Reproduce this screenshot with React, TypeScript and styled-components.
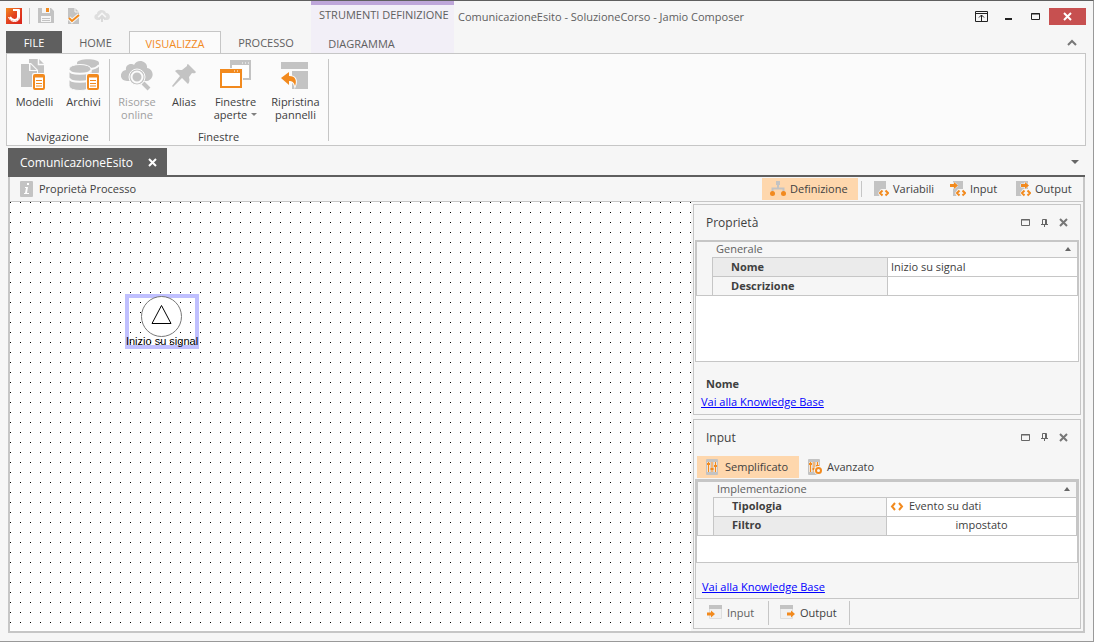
import React from "react";
import styled, { createGlobalStyle, css } from "styled-components";

const c = {
  text: "#404040",
  soft: "#606060",
  dark: "#5f5f5f",
  line: "#c6c6c6",
  bg: "#f6f6f6",
  gray: "#c3c3c3",
  orange: "#f28a1e",
  active: "#fed7ad",
};

const Global = createGlobalStyle`
  *, *::before, *::after { box-sizing: border-box; }
  body { margin: 0; background: ${c.bg}; }
  body, button, input {
    font-family: "Open Sans", "Noto Sans", sans-serif;
    font-size: 11px;
    color: ${c.text};
  }
  button { border: 0; padding: 0; background: none; }
  svg { display: block; flex: none; }
`;

const Window = styled.div`
  min-height: 100vh;
  display: flex;
  flex-direction: column;
  background: ${c.bg};
  border-top: 1px solid ${c.dark};
  border-right: 1px solid #999999;
  border-bottom: 1px solid #999999;
`;

const Header = styled.header`
  display: flex;
  height: 52px;
  padding: 0 7px 0 6px;
`;

const HeaderColumn = styled.div<{ $grow?: boolean; $width?: number }>`
  display: flex;
  flex-direction: column;
  ${(p) => p.$grow && "flex: 1;"}
  ${(p) => p.$width && `width: ${p.$width}px;`}
`;

const QuickAccess = styled.div`
  display: flex;
  align-items: center;
  height: 31px;
`;

const QuickButton = styled.button`
  width: 28px;
  height: 20px;
  display: grid;
  place-items: center;
`;

const QuickDivider = styled.span`
  width: 1px;
  height: 16px;
  margin: 0 2px 0 7px;
  background: ${c.line};
`;

const Tabs = styled.nav`
  display: flex;
  height: 22px;
  position: relative;
  z-index: 1;
`;

const RibbonTab = styled.button<{ $kind?: "file" | "active"; $width: number }>`
  width: ${(p) => p.$width}px;
  height: 21px;
  line-height: 24px;
  color: ${c.soft};
  ${(p) =>
    p.$kind === "file" &&
    css`
      height: 22px;
      color: #ffffff;
      background: ${c.dark};
    `}
  ${(p) =>
    p.$kind === "active" &&
    css`
      height: 22px;
      color: ${c.orange};
      background: #fbfbfb;
      border: 1px solid ${c.line};
      border-bottom: 0;
    `}
`;

const ContextGroup = styled.div`
  width: 143px;
  display: flex;
  flex-direction: column;
  background: #f2eff7;
  border-top: 4px solid #bea6d9;
`;

const ContextTitle = styled.div`
  height: 27px;
  padding-left: 8px;
  line-height: 20px;
  color: ${c.soft};
  white-space: nowrap;
`;

const TitleBar = styled.div`
  display: flex;
  align-items: center;
  height: 31px;
`;

const Title = styled.h1`
  flex: 1;
  margin: 0;
  padding-left: 4px;
  font-size: 11px;
  font-weight: 400;
  color: ${c.soft};
`;

const WindowButton = styled.button<{ $close?: boolean }>`
  width: ${(p) => (p.$close ? 37 : 27)}px;
  height: 17px;
  display: grid;
  place-items: center;
  background: ${(p) => (p.$close ? "#c75050" : "transparent")};
`;

const CollapseButton = styled.button`
  align-self: flex-end;
  width: 28px;
  height: 21px;
  display: grid;
  place-items: center;
`;

const Ribbon = styled.div`
  display: flex;
  height: 93px;
  margin: 0 7px 0 6px;
  padding: 5px 0 4px 0;
  background: #fbfbfb;
  border: 1px solid ${c.line};
`;

const RibbonGroup = styled.section`
  display: flex;
  flex-direction: column;
  justify-content: space-between;
  padding: 0 1px 0 3px;
  border-right: 1px solid ${c.line};
`;

const RibbonItems = styled.div`
  display: flex;
`;

const RibbonButton = styled.button<{ $width: number }>`
  width: ${(p) => p.$width}px;
  display: flex;
  flex-direction: column;
  align-items: center;
  gap: 4px;
  line-height: 13px;
  white-space: nowrap;
  &:disabled {
    color: #a0a0a0;
  }
`;

const GroupLabel = styled.div`
  height: 10px;
  padding-right: 3px;
  line-height: 11px;
  text-align: center;
`;

const MenuCaret = styled.span`
  display: inline-block;
  margin-left: 4px;
  vertical-align: 3px;
  border: 3px solid transparent;
  border-top-color: #808080;
  border-bottom: 0;
`;

const DocumentTabs = styled.div`
  display: flex;
  justify-content: space-between;
  align-items: center;
  height: 29px;
  margin: 2px 8px 0 8px;
  padding-right: 4px;
  border-bottom: 2px solid ${c.dark};
`;

const DocumentTab = styled.div`
  display: flex;
  align-items: center;
  gap: 14px;
  height: 27px;
  padding: 1px 8px 0 12px;
  font-size: 12px;
  color: #ffffff;
  background: ${c.dark};
`;

const IconButton = styled.button`
  width: 12px;
  height: 16px;
  display: grid;
  place-items: center;
`;

const Workspace = styled.main`
  flex: 1;
  display: flex;
  flex-direction: column;
  margin: 0 8px 8px 8px;
  border: solid ${c.line};
  border-width: 0 2px 2px 2px;
`;

const Toolbar = styled.div`
  display: flex;
  align-items: center;
  height: 25px;
  padding: 0 1px 1px 2px;
  border-bottom: 1px solid ${c.line};
`;

const ToolButton = styled.button<{ $active?: boolean; $width?: number }>`
  display: flex;
  align-items: center;
  gap: 4px;
  height: 22px;
  padding: 0 8px;
  white-space: nowrap;
  ${(p) => p.$width && `width: ${p.$width}px;`}
  background: ${(p) => (p.$active ? c.active : "transparent")};
`;

const InfoButton = styled(ToolButton)`
  gap: 6px;
`;

const Spacer = styled.span`
  flex: 1;
`;

const ToolDivider = styled.span`
  width: 1px;
  height: 16px;
  margin: 0 3px;
  background: ${c.line};
`;

const Content = styled.div`
  flex: 1;
  display: flex;
`;

const Canvas = styled.div`
  flex: 1;
  position: relative;
  background: conic-gradient(from 270deg at 1px 1px, #000000 90deg, #ffffff 0) 0 0 / 10px 10px;
`;

const DiagramNode = styled.div`
  position: absolute;
  left: 115px;
  top: 92px;
  width: 74px;
  height: 55px;
  border: 4px solid #c0c0ff;
`;

const NodeShape = styled.svg`
  position: absolute;
  left: 10px;
  top: -4px;
`;

const NodeLabel = styled.span`
  position: absolute;
  left: -10px;
  right: -10px;
  bottom: -3px;
  line-height: 14px;
  text-align: center;
  font-family: "Liberation Sans", sans-serif;
  color: #000000;
  white-space: nowrap;
`;

const Side = styled.aside`
  width: 392px;
  display: flex;
  flex-direction: column;
  gap: 4px;
  padding: 2px;
  background: ${c.bg};
`;

const Panel = styled.section`
  flex: 1 1 0;
  display: flex;
  flex-direction: column;
  border: 1px solid ${c.line};
`;

const PanelHeader = styled.div`
  display: flex;
  align-items: center;
  gap: 7px;
  height: 35px;
  padding: 0 11px 0 12px;
`;

const PanelTitle = styled.h2`
  flex: 1;
  margin: 0;
  font-size: 12px;
  font-weight: 400;
`;

const PanelTools = styled.div`
  display: flex;
  height: 24px;
  padding: 1px 3px 1px;
`;

const GridBox = styled.div`
  flex: 1;
  margin: 0 1px;
  background: #ffffff;
  border: 1px solid ${c.line};
`;

const FramedBox = styled.div`
  flex: 1;
  display: flex;
  flex-direction: column;
  margin: 0 1px;
  border: 1px solid ${c.line};
  ${GridBox} {
    margin: 0;
  }
`;

const PropertyTable = styled.table`
  width: 100%;
  table-layout: fixed;
  border-spacing: 0;
  border: 1px solid ${c.line};
  background: ${c.bg};
  td,
  th {
    height: 19px;
    padding: 0 0 1px;
    line-height: 16px;
  }
`;

const IndentColumn = styled.col`
  width: 15px;
`;

const NameColumn = styled.col<{ $width: number }>`
  width: ${(p) => p.$width}px;
`;

const GroupButton = styled.button`
  display: flex;
  align-items: center;
  justify-content: space-between;
  width: 100%;
  height: 14px;
  padding: 0 5px 0 19px;
  line-height: 14px;
  color: ${c.soft};
`;

const GroupCell = styled.td`
  && {
    height: 15px;
  }
`;

const NameCell = styled.th<{ $selected?: boolean }>`
  && {
    padding-left: 18px;
  }
  text-align: left;
  font-weight: 700;
  border: solid ${c.line};
  border-width: 1px 0 0 1px;
  background: ${(p) => (p.$selected ? "#ebebeb" : c.bg)};
`;

const ValueCell = styled.td`
  border: solid ${c.line};
  border-width: 1px 0 0 1px;
  background: #ffffff;
`;

const ValueInput = styled.input`
  display: block;
  width: 100%;
  height: 16px;
  padding: 0 3px 1px;
  border: 0;
  outline: 0;
  background: transparent;
`;

const Value = styled.div<{ $center?: boolean }>`
  display: flex;
  align-items: center;
  gap: 5px;
  padding: 0 3px;
  ${(p) => p.$center && "justify-content: center;"}
`;

const PanelFooter = styled.div<{ $height: number }>`
  height: ${(p) => p.$height}px;
  display: flex;
  flex-direction: column;
  justify-content: flex-end;
  align-items: flex-start;
  padding: 0 0 3px 7px;
  line-height: 18px;
  ${FramedBox} & {
    padding: 0 0 2px 6px;
  }
`;

const PropertyName = styled.strong`
  padding-left: 5px;
`;

const Link = styled.a`
  color: #0000ff;
`;

const BottomTabs = styled.div`
  display: flex;
  height: 29px;
  padding: 2px 0 3px 2px;
`;

const BottomTab = styled.button<{ $active?: boolean; $width: number }>`
  width: ${(p) => p.$width}px;
  display: flex;
  align-items: center;
  gap: 5px;
  padding: 0 0 2px 11px;
  border-right: 1px solid ${c.line};
  color: ${(p) => (p.$active ? c.soft : c.text)};
`;

const DocIcon = ({ x, y }: { x: number; y: number }) => (
  <g transform={`translate(${x} ${y})`}>
    <rect x="-1" y="-1" width="14" height="18" rx="2" fill="#fbfbfb" />
    <rect x="1" y="1" width="10" height="14" rx="1" fill="#fff" stroke={c.orange} strokeWidth="2" />
    <path d="M1 2.500h10" stroke={c.orange} strokeWidth="2" />
    <path d="M3 6.500h6M3 9.500h6M3 12h6" stroke={c.orange} fill="none" />
  </g>
);

const TemplatesIcon = () => (
  <svg width="32" height="32">
    <path d="M10 0h10l5 5v13H10z" fill={c.gray} />
    <path d="M19.500 0v5.500H25" stroke="#fbfbfb" fill="none" strokeWidth="1.500" />
    <path d="M1 4h11l7 7v17H1z" fill="#fbfbfb" />
    <path d="M2 5h8v7h8v16H2z" fill={c.gray} />
    <path d="m11.500 5 6 6h-6z" fill={c.gray} />
    <DocIcon x={14} y={15} />
  </svg>
);

const ArchiveIcon = () => (
  <svg width="32" height="32">
    <path d="M9 4c0-5 22-5 22 0v18c-1 3-8 4-12 4L9 12z" fill={c.gray} />
    <path d="M21 10c5 0 8-1 10-4M22 18c4 0 7-1 9-4" stroke="#fbfbfb" fill="none" strokeWidth="2" />
    <path d="M1 10c0-6 22-6 22 0v17c0 6-22 6-22 0z" fill={c.gray} stroke="#fbfbfb" />
    <path d="M1 11c1 5 21 5 22 0M1 19c1 5 21 5 22 0" stroke="#fbfbfb" strokeWidth="2" fill="none" />
    <DocIcon x={19} y={15} />
  </svg>
);

const CloudSearchIcon = () => (
  <svg width="32" height="32">
    <path d="M6 22c-8 0-8-10-1-11C4 5 11 4 13 6c3-7 14-4 13 3 7 1 8 11 0 13z" fill={c.gray} />
    <circle cx="16" cy="18" r="8" fill={c.gray} stroke="#fbfbfb" strokeWidth="1" />
    <circle cx="16" cy="18" r="5.500" fill={c.gray} stroke="#fbfbfb" strokeWidth="2" />
    <path d="m22 24 6 6" stroke="#fbfbfb" strokeWidth="6" />
    <path d="m22 24 6 6" stroke={c.gray} strokeWidth="4" />
  </svg>
);

const PushpinIcon = () => (
  <svg width="32" height="32">
    <path
      d="m20 5 8 8c-1 2-3 1-4 1l-3 4c1 4 0 6-1 7l-6-6L5 28l-1-1 8-10-5-5c2-2 5-1 7-1l5-4c0-1 0-2 1-2z"
      fill={c.gray}
    />
  </svg>
);

const WindowsIcon = () => (
  <svg width="32" height="32">
    <path d="M11 2h19v18H11z" fill="#fff" stroke={c.gray} strokeWidth="2" />
    <path d="M10 4h21" stroke={c.gray} strokeWidth="4" />
    <path d="M22 4h1M25 4h1M28 4h1" stroke="#fff" />
    <path d="M-1 9h24v22H-1z" fill="#fbfbfb" />
    <path d="M1 11h20v17H1z" fill="#fff" stroke={c.orange} strokeWidth="2" />
    <path d="M0 12h22" stroke={c.orange} strokeWidth="4" />
    <path d="M14 12h1M17 12h1" stroke="#fff" />
  </svg>
);

const RestoreIcon = () => (
  <svg width="32" height="32">
    <path d="M1 3h27v7H1zM12 12h16v18H12z" fill={c.gray} />
    <path d="m1 19 8-6v4c7 0 8 5 6 10-1-4-3-5-6-5v4z" fill={c.orange} stroke="#fbfbfb" strokeWidth="2" paintOrder="stroke" />
  </svg>
);

const Logo = () => (
  <svg width="16" height="16">
    <defs>
      <linearGradient id="logo" x1="0" y1="0" x2="1" y2="1">
        <stop offset="0" stopColor="#f28a1e" />
        <stop offset="0.5" stopColor="#e2401f" />
        <stop offset="1" stopColor="#d9231c" />
      </linearGradient>
    </defs>
    <rect width="16" height="16" fill="url(#logo)" />
    <path d="M7 1.500h6.500V9c0 3-2 4.500-5 4.500S3.500 12 2.500 9" fill="none" stroke="#fff" strokeWidth="1" />
    <path d="M7 2h5v7c0 2-1 3-3.500 3S5 11 4 9" fill="none" stroke="#fff" strokeWidth="2" />
  </svg>
);

const SaveIcon = () => (
  <svg width="16" height="16">
    <path d="M0 0h13l3 3v12H0z" fill={c.gray} />
    <path d="M4 0h8v5H4zM3 8h10v6H3z" fill="#f6f6f6" />
    <path d="M8 0h3v4H8z" fill={c.orange} />
    <path d="M4 10.500h8M4 12.500h8" stroke={c.gray} />
  </svg>
);

const CheckDocIcon = () => (
  <svg width="16" height="16">
    <path d="M2 0h7l4 4v12H2z" fill={c.gray} />
    <path d="M9 0v4h4" stroke="#f6f6f6" fill="none" />
    <path d="m3 10 3 3 7-6" stroke="#f6f6f6" strokeWidth="4" fill="none" />
    <path d="m3 10 3 3 7-6" stroke={c.orange} strokeWidth="2" fill="none" />
  </svg>
);

const UploadIcon = () => (
  <svg width="16" height="16">
    <path d="M3 12c-4-1-3-6 0-6 0-4 7-6 9-1 5 0 5 7 1 7z" fill="#dedede" />
    <path d="M8 15V7M5 10l3-3 3 3" stroke="#f6f6f6" strokeWidth="4" fill="none" />
    <path d="M8 14V8M5 11l3-3 3 3" stroke="#dadada" strokeWidth="2" fill="none" />
  </svg>
);

const InfoIcon = () => (
  <svg width="13" height="16">
    <rect width="13" height="16" rx="1" fill={c.gray} />
    <path d="M7 2h2v2H7zM5 6h3L7 12h2v1H4v-1h1l1-5H5z" fill="#fff" />
  </svg>
);

const HierarchyIcon = () => (
  <svg width="16" height="16">
    <path d="M8 3v4M2.500 11V7.500h11V11" stroke={c.gray} strokeWidth="2" fill="none" />
    <rect x="6" y="0" width="4" height="4" fill={c.gray} />
    <circle cx="2.500" cy="12.500" r="2.500" fill={c.orange} />
    <circle cx="13.500" cy="12.500" r="2.500" fill={c.orange} />
  </svg>
);

const VariableIcon = ({ arrow }: { arrow?: "in" | "out" }) => (
  <svg width="16" height="16">
    <path d={arrow === "in" ? "M3 0h10v15H3z" : "M1 0h12v15H1z"} fill={c.gray} />
    <path d="M5 12 8 8h6l2 4v4H7z" fill="#f6f6f6" />
    <path d="M9.500 9.500 7 12l2.500 2.500M12.500 9.500 15 12l-2.500 2.500" stroke={c.orange} strokeWidth="2" fill="none" />
    {arrow && (
      <path
        transform={arrow === "out" ? "translate(6 0)" : undefined}
        d="M0 3h4V1l4 3.500L4 8V6H0z"
        fill={c.orange}
        stroke="#f6f6f6"
        paintOrder="stroke"
      />
    )}
  </svg>
);

const SlidersIcon = ({ gear }: { gear?: boolean }) => (
  <svg width="16" height="16">
    <rect x="1" width="12" height="16" rx="1" fill={c.gray} />
    <path d="M3.500 3v10M7 3v10M10.500 3v10" stroke="#f3e3d3" strokeWidth="3" />
    <path d="M3.500 3v10M7 3v10M10.500 3v10" stroke={c.orange} />
    <path d="M2 5h3M5.500 10h3M9 7h3" stroke={c.orange} strokeWidth="2" />
    {gear && (
      <>
        <circle cx="11.500" cy="11.500" r="4.500" fill="#f6f6f6" />
        <circle cx="11.500" cy="11.500" r="2.500" fill="none" stroke={c.orange} strokeWidth="2" />
      </>
    )}
  </svg>
);

const FlowIcon = ({ out }: { out?: boolean }) => (
  <svg width="15" height="14">
    <path d={out ? "M.5 1h12v12.500H.5z" : "M2.500 1h12v12.500h-12z"} fill="#f1f1f1" stroke="#dedede" />
    <path d={out ? "M0 0h13v4H0z" : "M2 0h13v4H2z"} fill={c.gray} />
    <path
      transform={out ? "translate(7 0)" : undefined}
      d="M0 7.500h4V5.500l4 3.500-4 3.500v-2H0z"
      fill={c.orange}
    />
  </svg>
);

const CodeIcon = () => (
  <svg width="14" height="9">
    <path d="M5 1 2 4.500 5 8M9 1l3 3.500L9 8" stroke={c.orange} strokeWidth="2" fill="none" />
  </svg>
);

const CloseIcon = ({ color }: { color: string }) => (
  <svg width="9" height="9">
    <path d="m1 1 7 7M8 1 1 8" stroke={color} strokeWidth="2" />
  </svg>
);

const Triangle = ({ down }: { down?: boolean }) => (
  <svg width="8" height="4">
    <path d={down ? "M0 0h8L4 4z" : "M1 4h6L4 0z"} fill="#666" />
  </svg>
);

const HeaderTools = () => (
  <>
    <IconButton aria-label="Ingrandisci">
      <svg width="9" height="7">
        <path d="M.5.5h8v6h-8zM0 1h9" stroke="#666" fill="none" />
      </svg>
    </IconButton>
    <IconButton aria-label="Blocca">
      <svg width="7" height="8">
        <path d="M1.500 5V.5h4V5M0 5.500h7M3.500 5v3M4.500 0v5" stroke="#666" fill="none" />
      </svg>
    </IconButton>
    <IconButton aria-label="Chiudi">
      <CloseIcon color="#777" />
    </IconButton>
  </>
);

const GroupRow = ({ name }: { name: string }) => (
  <tr>
    <GroupCell colSpan={3}>
      <GroupButton>
        {name}
        <Triangle />
      </GroupButton>
    </GroupCell>
  </tr>
);

const Columns = ({ nameWidth }: { nameWidth: number }) => (
  <colgroup>
    <IndentColumn />
    <NameColumn $width={nameWidth} />
    <col />
  </colgroup>
);

export default function App() {
  return (
    <Window>
      <Global />
      <Header>
        <HeaderColumn $width={305}>
          <QuickAccess>
            <Logo />
            <QuickDivider />
            <QuickButton aria-label="Salva">
              <SaveIcon />
            </QuickButton>
            <QuickButton aria-label="Verifica">
              <CheckDocIcon />
            </QuickButton>
            <QuickButton aria-label="Pubblica">
              <UploadIcon />
            </QuickButton>
          </QuickAccess>
          <Tabs>
            <RibbonTab $kind="file" $width={56}>FILE</RibbonTab>
            <RibbonTab $width={67}>HOME</RibbonTab>
            <RibbonTab $kind="active" $width={92}>VISUALIZZA</RibbonTab>
            <RibbonTab $width={90}>PROCESSO</RibbonTab>
          </Tabs>
        </HeaderColumn>
        <ContextGroup>
          <ContextTitle>STRUMENTI DEFINIZIONE</ContextTitle>
          <RibbonTab $width={101}>DIAGRAMMA</RibbonTab>
        </ContextGroup>
        <HeaderColumn $grow>
          <TitleBar>
            <Title>ComunicazioneEsito - SoluzioneCorso - Jamio Composer</Title>
            <WindowButton aria-label="Opzioni barra multifunzione">
              <svg width="13" height="11">
                <path d="M.5.5h12v10H.5zM0 2.500h13M6.500 10V4M4 6.500 6.500 4 9 6.500" stroke="#222" fill="none" />
              </svg>
            </WindowButton>
            <WindowButton aria-label="Riduci a icona">
              <svg width="7" height="6">
                <path d="M0 5h7" stroke="#222" strokeWidth="2" />
              </svg>
            </WindowButton>
            <WindowButton aria-label="Ingrandisci">
              <svg width="9" height="7">
                <path d="M.5.5h8v6h-8zM0 1h9" stroke="#222" fill="none" />
              </svg>
            </WindowButton>
            <WindowButton $close aria-label="Chiudi">
              <CloseIcon color="#fff" />
            </WindowButton>
          </TitleBar>
          <CollapseButton aria-label="Comprimi barra multifunzione">
            <svg width="10" height="7">
              <path d="m1 6 4-4 4 4" stroke="#777" strokeWidth="2" fill="none" />
            </svg>
          </CollapseButton>
        </HeaderColumn>
      </Header>

      <Ribbon>
        <RibbonGroup>
          <RibbonItems>
            <RibbonButton $width={49}>
              <TemplatesIcon />
              Modelli
            </RibbonButton>
            <RibbonButton $width={49}>
              <ArchiveIcon />
              Archivi
            </RibbonButton>
          </RibbonItems>
          <GroupLabel>Navigazione</GroupLabel>
        </RibbonGroup>
        <RibbonGroup>
          <RibbonItems>
            <RibbonButton $width={48} disabled>
              <CloudSearchIcon />
              <span>Risorse<br />online</span>
            </RibbonButton>
            <RibbonButton $width={46}>
              <PushpinIcon />
              Alias
            </RibbonButton>
            <RibbonButton $width={57}>
              <WindowsIcon />
              <span>Finestre<br />aperte<MenuCaret /></span>
            </RibbonButton>
            <RibbonButton $width={63}>
              <RestoreIcon />
              <span>Ripristina<br />pannelli</span>
            </RibbonButton>
          </RibbonItems>
          <GroupLabel>Finestre</GroupLabel>
        </RibbonGroup>
      </Ribbon>

      <DocumentTabs>
        <DocumentTab>
          ComunicazioneEsito
          <IconButton aria-label="Chiudi scheda">
            <CloseIcon color="#fff" />
          </IconButton>
        </DocumentTab>
        <IconButton aria-label="Elenco schede">
          <Triangle down />
        </IconButton>
      </DocumentTabs>

      <Workspace>
        <Toolbar>
          <InfoButton>
            <InfoIcon />
            Proprietà Processo
          </InfoButton>
          <Spacer />
          <ToolButton $active $width={96}>
            <HierarchyIcon />
            Definizione
          </ToolButton>
          <ToolDivider />
          <ToolButton $width={77}>
            <VariableIcon />
            Variabili
          </ToolButton>
          <ToolButton $width={65}>
            <VariableIcon arrow="in" />
            Input
          </ToolButton>
          <ToolButton $width={75}>
            <VariableIcon arrow="out" />
            Output
          </ToolButton>
        </Toolbar>
        <Content>
          <Canvas>
            <DiagramNode>
              <NodeShape width="44" height="44">
                <circle cx="22.500" cy="22.500" r="20" fill="#fff" stroke="#777" />
                <path d="M22.500 11.500 32 29.500H13z" fill="#fff" stroke="#000" />
              </NodeShape>
              <NodeLabel>Inizio su signal</NodeLabel>
            </DiagramNode>
          </Canvas>
          <Side>
            <Panel>
              <PanelHeader>
                <PanelTitle>Proprietà</PanelTitle>
                <HeaderTools />
              </PanelHeader>
              <GridBox>
                <PropertyTable>
                  <Columns nameWidth={175} />
                  <tbody>
                    <GroupRow name="Generale" />
                    <tr>
                      <td />
                      <NameCell scope="row" $selected>
                        <label htmlFor="nome">Nome</label>
                      </NameCell>
                      <ValueCell>
                        <ValueInput id="nome" defaultValue="Inizio su signal" />
                      </ValueCell>
                    </tr>
                    <tr>
                      <td />
                      <NameCell scope="row">
                        <label htmlFor="descrizione">Descrizione</label>
                      </NameCell>
                      <ValueCell>
                        <ValueInput id="descrizione" />
                      </ValueCell>
                    </tr>
                  </tbody>
                </PropertyTable>
              </GridBox>
              <PanelFooter $height={52}>
                <PropertyName>Nome</PropertyName>
                <Link href="#kb">Vai alla Knowledge Base</Link>
              </PanelFooter>
            </Panel>
            <Panel>
              <PanelHeader>
                <PanelTitle>Input</PanelTitle>
                <HeaderTools />
              </PanelHeader>
              <PanelTools>
                <ToolButton $active $width={102}>
                  <SlidersIcon />
                  Semplificato
                </ToolButton>
                <ToolButton>
                  <SlidersIcon gear />
                  Avanzato
                </ToolButton>
              </PanelTools>
              <FramedBox>
                <GridBox>
                  <PropertyTable>
                    <Columns nameWidth={173} />
                    <tbody>
                      <GroupRow name="Implementazione" />
                      <tr>
                        <td />
                        <NameCell scope="row">Tipologia</NameCell>
                        <ValueCell>
                          <Value>
                            <CodeIcon />
                            Evento su dati
                          </Value>
                        </ValueCell>
                      </tr>
                      <tr>
                        <td />
                        <NameCell scope="row" $selected>Filtro</NameCell>
                        <ValueCell>
                          <Value $center>impostato</Value>
                        </ValueCell>
                      </tr>
                    </tbody>
                  </PropertyTable>
                </GridBox>
                <PanelFooter $height={35}>
                  <Link href="#kb">Vai alla Knowledge Base</Link>
                </PanelFooter>
              </FramedBox>
              <BottomTabs>
                <BottomTab $active $width={73}>
                  <FlowIcon />
                  Input
                </BottomTab>
                <BottomTab $width={81}>
                  <FlowIcon out />
                  Output
                </BottomTab>
              </BottomTabs>
            </Panel>
          </Side>
        </Content>
      </Workspace>
    </Window>
  );
}
